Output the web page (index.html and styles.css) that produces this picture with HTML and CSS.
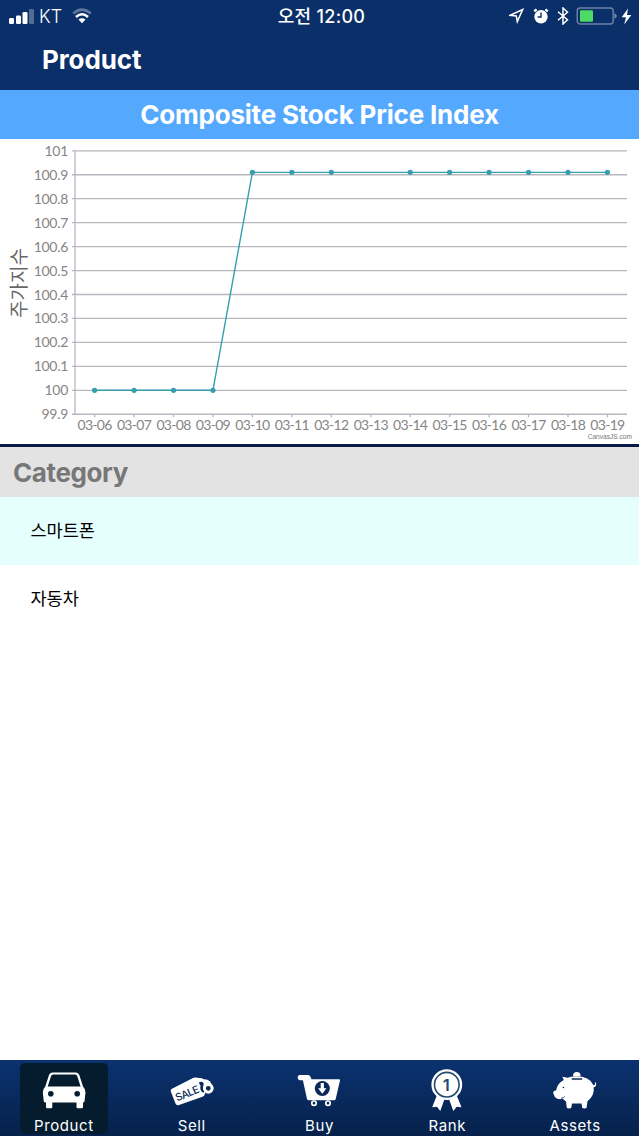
FILE: index.html
```html
<!DOCTYPE html>
<html lang="ko">
<head>
    <meta charset="UTF-8">
    <meta name="viewport" content="width=device-width, initial-scale=1.0">
    <title>Product</title>
    <link rel="stylesheet" href="styles.css">
</head>
<body>
    <header class="header">
        <div class="status-bar">
            <div class="status-left">
                <svg class="signal" width="25" height="17" viewBox="0 0 25 17">
                    <rect x="0" y="10" width="5" height="6" rx="1.3"/>
                    <rect x="7" y="7.5" width="5" height="8.5" rx="1.3"/>
                    <rect x="13.5" y="4" width="5" height="12" rx="1.3"/>
                    <rect x="20" y="1" width="5" height="15" rx="1.3" opacity=".3"/>
                </svg>
                <span class="carrier">KT</span>
                <svg class="wifi" width="20" height="16" viewBox="0 0 20 16">
                    <path d="M1.2 5.5Q10-2.3 18.8 5.5" opacity=".35"/>
                    <path d="M4 9Q10 3.5 16 9"/>
                    <path class="fill" d="M6.5 11.6Q10 8.7 13.5 11.6L10 15.3z"/>
                </svg>
            </div>
            <div class="time">오전 12:00</div>
            <div class="status-right">
                <svg width="16" height="16" viewBox="0 0 16 16">
                    <path class="line" d="M1.2 7.3L13.7 1.5 8.3 13.6 7.3 8z"/>
                </svg>
                <svg width="16" height="16" viewBox="0 0 16 16">
                    <circle cx="8" cy="8.8" r="6.7"/>
                    <path class="line thick" d="M1.2 3.4L3.6 1.4M14.8 3.4L12.4 1.4"/>
                    <path class="cut" d="M8 4.5V9H4.6"/>
                </svg>
                <svg width="12" height="18" viewBox="0 0 12 18">
                    <path class="line" d="M1 4.8L10.5 12.8 6 17V1L10.5 5.2 1 13.2"/>
                </svg>
                <svg width="41" height="18" viewBox="0 0 41 18">
                    <rect class="battery" x="1.2" y="1" width="36" height="16" rx="3"/>
                    <rect class="level" x="4" y="3.2" width="13" height="11.6" rx="1"/>
                    <path d="M38.3 6.3Q40.8 7 40.8 9T38.3 11.7z" opacity=".4"/>
                </svg>
                <svg width="11" height="17" viewBox="0 0 11 17">
                    <path d="M7 .5L.7 9.3H5L3.2 16.5 10.4 7H6z"/>
                </svg>
            </div>
        </div>
        <h1 class="title">Product</h1>
    </header>

    <h2 class="index-title">Composite Stock Price Index</h2>
    <svg class="chart" id="chart" width="639" height="305" viewBox="0 0 639 305"></svg>

    <h2 class="category-title">Category</h2>
    <ul class="category-list">
        <li>스마트폰</li>
        <li>자동차</li>
    </ul>

    <nav class="tabs">
        <a class="tab active">
            <svg viewBox="0 0 48 44">
                <path d="M12.3 4.5H36Q38.4 4.5 39.3 7L43 18.5Q45.5 21 45.5 24.5L44.5 33.5Q44.3 34.5 43 34.5V39Q43 40.3 41.7 40.3H37.8Q36.5 40.3 36.5 39V34.5H12.3V39Q12.3 40.3 11 40.3H7.3Q6 40.3 6 39V34.5Q4 34.5 3.8 33.5L2.8 24.5Q2.8 21 5.3 18.5L9 7Q9.9 4.5 12.3 4.5zM13 6.5Q11.6 6.5 11.1 8L7.7 18.5H40.6L37.2 8Q36.7 6.5 35.2 6.5z" fill-rule="evenodd"/>
                <circle class="dark" cx="10.8" cy="25.7" r="2.8"/>
                <circle class="dark" cx="37.2" cy="25.7" r="2.8"/>
            </svg>
            <span>Product</span>
        </a>
        <a class="tab">
            <svg viewBox="0 0 48 44">
                <path d="M3.5 21L24.5 10.2Q26 9.5 27.5 9.6L34 10.2 38.5 14 37 26Q36.5 28 34.5 28.8L11 37Q8.5 38 7.5 35.5L2.8 23.5Q2.3 21.7 3.5 21z"/>
                <path class="sale-hole" d="M31.5 15.8Q35 14 34 18T36.3 23.5"/>
                <circle class="ring" cx="40.3" cy="20.3" r="3.9"/>
                <path d="M34.7 11L39.5 11.8Q42 12.5 43.5 16L40 18z"/>
                <text class="sale" x="9.3" y="33.6" transform="rotate(-23 9.3 33.6)">SALE</text>
            </svg>
            <span>Sell</span>
        </a>
        <a class="tab">
            <svg viewBox="0 0 48 44">
                <path d="M4.6 7H13Q14.8 7 15.5 8.7L16.5 11.2H44Q45.2 11.2 45 12.5L40.7 31Q40.4 32.3 39 32.3H14Q12.5 32.3 12 31L7.9 12.2H4.6Q2.6 11.8 2.6 9.5T4.6 7z"/>
                <circle class="dark" cx="27.3" cy="20.5" r="7.5"/>
                <path d="M25.7 15H28.9V20.3H31.5L27.3 25.7 23.1 20.3H25.7z"/>
                <circle class="wheel" cx="19" cy="35.2" r="2.2"/>
                <circle class="wheel" cx="33" cy="35.2" r="2.2"/>
            </svg>
            <span>Buy</span>
        </a>
        <a class="tab">
            <svg viewBox="0 0 48 44">
                <path d="M14 27L9.2 39.3 14 38.8 17.3 43 21.5 31H26L30.3 43 33.7 38.8 38.5 39.3 33.5 27z"/>
                <circle cx="23.8" cy="16.7" r="15.4"/>
                <circle class="medal" cx="23.8" cy="16.7" r="12.3"/>
                <text class="medal-number" x="23.3" y="22.6">1</text>
            </svg>
            <span>Rank</span>
        </a>
        <a class="tab">
            <svg viewBox="0 0 48 44">
                <path d="M12.8 12L11.3 8.8 16.5 9.8Q20 8.3 25 8.3 38.5 8.3 42.3 17 44.7 17.5 43.8 14.2L45 14.8Q45.8 18.8 42.7 19.3 43.8 27.5 36.5 33.2L35.5 40Q33.5 40.8 31.3 40L30.5 35.5H21L20.2 40Q18 40.8 15.8 40L15 33.5 11.7 30.8Q7 32 4 29.2L2.2 25.3Q1.9 22.8 5.2 22.3 6 15.5 12.8 12z"/>
                <path d="M22 8.2Q22 4 25.8 4T29.6 8.2z"/>
                <path class="slot" d="M20.7 11H31.2"/>
                <circle class="dark" cx="12.4" cy="19.5" r=".8"/>
                <path class="mouth" d="M10 30.2Q12.5 30.4 13.7 28.4"/>
            </svg>
            <span>Assets</span>
        </a>
    </nav>

    <script src="chart.js"></script>
</body>
</html>
```

FILE: styles.css
```css
* {
    margin: 0;
    padding: 0;
    box-sizing: border-box;
}

body {
    font-family: Inter, "Noto Sans CJK KR", sans-serif;
    background: #fff;
    color: #000;
    height: 1136px;
    display: flex;
    flex-direction: column;
    overflow: hidden;
}

.header {
    height: 90px;
    background: #0b2f68;
    color: #fff;
}

.status-bar {
    height: 32px;
    padding: 0 7px 0 9px;
    display: grid;
    grid-template-columns: 1fr auto 1fr;
    align-items: center;
}

.status-bar svg {
    fill: #fff;
}

.status-left,
.status-right {
    display: flex;
    align-items: center;
}

.status-right {
    justify-content: flex-end;
    gap: 8px;
}

.status-right svg:nth-child(n+4) {
    margin-left: -1px;
}

.status-right svg:last-child {
    margin-left: -4px;
}

.carrier {
    margin: 0 10px 0 5px;
    font-size: 18px;
    font-weight: 300;
}

.wifi path {
    fill: none;
    stroke: #fff;
    stroke-width: 2.5;
}

.wifi .fill {
    fill: #fff;
    stroke: none;
}

.time {
    padding: 1px 0 0 2px;
    font-size: 18px;
    font-weight: 500;
    line-height: 31px;
    letter-spacing: 0.3px;
}

.status-bar .line {
    fill: none;
    stroke: #fff;
    stroke-width: 1.5;
}

.status-bar .thick {
    stroke-width: 2.4;
}

.cut {
    fill: none;
    stroke: #0b2f68;
    stroke-width: 1.4;
}

.status-bar .battery {
    fill: none;
    stroke: #6d83a8;
    stroke-width: 1.4;
}

.status-bar .level {
    fill: #4cd964;
}

.title {
    padding-left: 42px;
    font-size: 26px;
    font-weight: 700;
    line-height: 56px;
    letter-spacing: -0.1px;
}

.index-title {
    height: 49px;
    background: #54a9ff;
    color: #fff;
    font-size: 26px;
    font-weight: 700;
    line-height: 50px;
    letter-spacing: -0.2px;
    text-align: center;
}

.chart {
    display: block;
    flex: none;
}

.grid-line {
    stroke: #b8b6bf;
    stroke-width: 1.3;
}

.series {
    fill: none;
    stroke: #369ead;
    stroke-width: 1.4;
}

.point {
    fill: #369ead;
}

.label {
    fill: #858585;
    font-family: Lato, sans-serif;
    font-size: 14px;
}

.label-y {
    letter-spacing: -0.3px;
    text-anchor: end;
}

.label-x {
    letter-spacing: -0.7px;
    text-anchor: middle;
}

.axis-title {
    fill: #666;
    font-family: "Noto Sans CJK KR", sans-serif;
    font-size: 19px;
    text-anchor: middle;
}

.credit {
    fill: #777;
    font-family: "Liberation Sans", sans-serif;
    font-size: 6.6px;
    text-anchor: end;
}

.category-title {
    height: 53px;
    padding-left: 13px;
    border-top: 3px solid #061a48;
    background: #e3e3e4;
    color: #777;
    font-size: 26px;
    font-weight: 700;
    line-height: 51px;
    letter-spacing: -0.4px;
}

.category-list {
    flex: 1;
    list-style: none;
}

.category-list li {
    height: 68px;
    padding-left: 30.5px;
    font-size: 17.5px;
    line-height: 67px;
}

.category-list li:first-child {
    background: #e5ffff;
}

.tabs {
    height: 76px;
    display: grid;
    grid-template-columns: repeat(5, 1fr);
    justify-items: center;
    padding-top: 3px;
    background: linear-gradient(#0b3270, #06214b);
    color: #fff;
}

.tab {
    width: 88px;
    height: 71px;
    padding-top: 5px;
    display: flex;
    flex-direction: column;
    align-items: center;
    border-radius: 5px;
    font-size: 15px;
    line-height: 28px;
    letter-spacing: 0.6px;
}

.tab.active {
    background: #041c2e;
}

.tab svg {
    width: 48px;
    height: 44px;
    flex: none;
    fill: #fff;
}

.tab .dark {
    fill: #092957;
}

.tab.active .dark {
    fill: #041c2e;
}

.tab .sale-hole {
    fill: none;
    stroke: #092957;
    stroke-width: 3;
}

.tab .ring {
    fill: #092957;
    stroke: #fff;
    stroke-width: 3;
}

.sale {
    fill: #092957;
    font-size: 10.5px;
    font-weight: 500;
    letter-spacing: -0.6px;
}

.wheel {
    fill: none;
    stroke: #fff;
    stroke-width: 1.7;
}

.medal {
    fill: none;
    stroke: #214a70;
    stroke-width: 1.6;
}

.medal-number {
    fill: #214a70;
    font-size: 16.5px;
    font-weight: 600;
    letter-spacing: 0;
    text-anchor: middle;
}

.slot,
.mouth {
    fill: none;
    stroke: #092957;
    stroke-width: 1.5;
}

.mouth {
    stroke-width: 0.8;
}
```

FILE: chart.js
```javascript
const chart = document.getElementById('chart');
const left = 75, right = 627, top0 = 11.8, rowStep = 23.95;
const firstX = 94.6, dayStep = 39.45;

// null = no index published that day
const values = [100, 100, 100, 100, 100.91, 100.91, 100.91, null, 100.91, 100.91, 100.91, 100.91, 100.91, 100.91];

const yOf = value => top0 + (101 - value) * 10 * rowStep;
const xOf = i => firstX + i * dayStep;

let svg = '';

for (let i = 0; i <= 11; i++) {
    const y = top0 + i * rowStep;
    const text = String((1010 - i) / 10);
    svg += `<line class="grid-line" x1="${left - 3}" y1="${y}" x2="${right}" y2="${y}"/>`;
    svg += `<text class="label label-y" x="68" y="${y + 5}">${text}</text>`;
}
const bottom = top0 + 11 * rowStep;
svg += `<line class="grid-line" x1="${left}" y1="${top0}" x2="${left}" y2="${bottom}"/>`;

values.forEach((value, i) => {
    const day = String(i + 6).padStart(2, '0');
    svg += `<line class="grid-line" x1="${xOf(i)}" y1="${bottom}" x2="${xOf(i)}" y2="${bottom + 3}"/>`;
    svg += `<text class="label label-x" x="${xOf(i)}" y="291">03-${day}</text>`;
});

const days = values.map((value, i) => [i, value]).filter(d => d[1] !== null);
svg += `<polyline class="series" points="${days.map(d => xOf(d[0]) + ',' + yOf(d[1])).join(' ')}"/>`;
days.forEach(d => {
    svg += `<circle class="point" cx="${xOf(d[0])}" cy="${yOf(d[1])}" r="2.6"/>`;
});

svg += '<text class="axis-title" x="26" y="144" transform="rotate(-90 26 144)">주가지수</text>';
svg += '<text class="credit" x="632" y="300">CanvasJS.com</text>';

chart.innerHTML = svg;
```
